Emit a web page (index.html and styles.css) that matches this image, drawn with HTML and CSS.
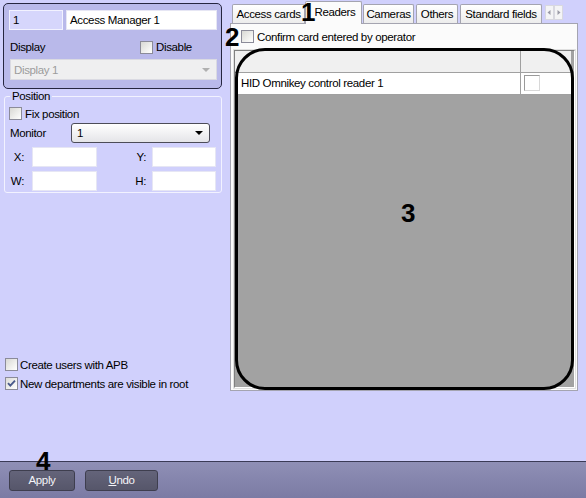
FILE: index.html
```html
<!DOCTYPE html>
<html>
<head>
<meta charset="utf-8">
<link rel="stylesheet" href="styles.css">
</head>
<body>
<div class="app">
  <div class="main">
    <div class="left">
      <div class="panel">
        <div class="prow">
          <div class="field fid">1</div>
          <div class="field fname">Access Manager 1</div>
        </div>
        <div class="prow r2">
          <span class="lbl-display">Display</span>
          <span class="chk"><span class="box"></span><span>Disable</span></span>
        </div>
        <div class="select dis"><span>Display 1</span><span class="arrow"></span></div>
      </div>

      <fieldset class="pos">
        <legend>Position</legend>
        <div class="chk fix"><span class="box"></span><span>Fix position</span></div>
        <div class="monrow">
          <span class="mlabel">Monitor</span>
          <div class="select mon"><span>1</span><span class="arrow"></span></div>
        </div>
        <div class="xyrow">
          <span class="l1">X:</span><div class="field in"></div>
          <span class="l2">Y:</span><div class="field in2"></div>
        </div>
        <div class="xyrow">
          <span class="l1">W:</span><div class="field in"></div>
          <span class="l2">H:</span><div class="field in2"></div>
        </div>
      </fieldset>

      <div class="bchecks">
        <div class="chk"><span class="box"></span><span>Create users with APB</span></div>
        <div class="chk"><span class="box on"><svg width="11" height="11" viewBox="0 0 11 11"><path d="M2 5.2 L4.3 7.6 L9 2.6" fill="none" stroke="#4a5a8c" stroke-width="1.9"/></svg></span><span>New departments are visible in root</span></div>
      </div>
    </div>

    <div class="right">
      <div class="tabs">
        <div class="tab t-access">Access cards</div>
        <div class="tab active t-readers">Readers</div>
        <div class="tab t-cameras">Cameras</div>
        <div class="tab t-others">Others</div>
        <div class="tab t-std">Standard fields</div>
        <div class="scroll">
          <span class="sbtn"><svg width="7" height="7" viewBox="0 0 7 7"><path d="M4.5 1 L1.5 3.5 L4.5 6Z" fill="#9a9aa6"/></svg></span>
          <span class="sbtn"><svg width="7" height="7" viewBox="0 0 7 7"><path d="M2.5 1 L5.5 3.5 L2.5 6Z" fill="#9a9aa6"/></svg></span>
        </div>
      </div>
      <div class="page">
        <div class="chk confirm"><span class="box"></span><span>Confirm card entered by operator</span></div>
        <div class="grid">
          <div class="grow ghead"><div class="c1"></div><div class="c2"></div></div>
          <div class="grow gdata"><div class="c1">HID Omnikey control reader 1</div><div class="c2"><span class="cellbox"></span></div></div>
        </div>
        <div class="callout"></div>
      </div>
      <span class="num n1">1</span>
      <span class="num n2">2</span>
      <span class="num n3">3</span>
    </div>
  </div>

  <div class="footer">
    <div class="btn apply">Apply</div>
    <div class="btn undo"><u>U</u>ndo</div>
  </div>
  <span class="num n4">4</span>
</div>
</body>
</html>
```

FILE: styles.css
```css
* { box-sizing: border-box; }
html, body { margin: 0; padding: 0; }
body {
  background: #d0d0fc;
  font-family: "Liberation Sans", Arial, sans-serif;
  font-size: 11.5px;
  letter-spacing: -0.35px;
  color: #000;
}
.app {
  position: relative;
  width: 586px;
  height: 498px;
  display: flex;
  flex-direction: column;
  overflow: hidden;
}
.main {
  height: 461px;
  display: flex;
}
.left {
  width: 230px;
  padding: 3px 0 0 3px;
  display: flex;
  flex-direction: column;
}
.panel {
  width: 219px;
  height: 86px;
  border: 1px solid #262640;
  border-radius: 5px;
  background: #b9b9ea;
  padding: 6px 0 0 5px;
}
.prow { display: flex; align-items: center; }
.field {
  height: 20px;
  background: #fff;
  border: 1px solid #e6e6f4;
  line-height: 18px;
  padding-left: 3px;
  white-space: nowrap;
}
.fid { width: 54px; background: #d6d6fc; border-color: #f2f2ff; }
.fname { width: 151px; margin-left: 3px; }
.r2 { margin-top: 10px; height: 14px; }
.lbl-display { width: 131px; padding-left: 1px; }
.chk { display: flex; align-items: center; white-space: nowrap; }
.box {
  width: 13px; height: 13px;
  border: 1px solid #8b8b99;
  background: linear-gradient(135deg, #d8d8d4 0%, #f4f4f2 70%, #ffffff 100%);
  margin-right: 3px;
  flex: none;
  display: flex; align-items: center; justify-content: center;
}
.select {
  height: 21px;
  display: flex;
  align-items: center;
  justify-content: space-between;
  padding: 0 6px 0 3px;
}
.select.dis {
  margin: 5px 0 0 1px;
  width: 207px;
  background: #efeff0;
  border: 1px solid #dadae2;
  color: #9c9c9c;
}
.arrow {
  width: 0; height: 0;
  border-left: 4px solid transparent;
  border-right: 4px solid transparent;
  border-top: 4px solid #000;
}
.dis .arrow { border-top-color: #b0b0b0; }

.pos {
  margin: 0 0 0 1px;
  padding: 0;
  width: 218px;
  height: 104px;
  border: 1px solid #f2f2ff;
  border-radius: 3px;
  min-width: 0;
}
.pos legend {
  padding: 0 2px;
  margin-left: 5px;
  line-height: 14px;
}
.fix { margin: 4px 0 0 4px; height: 13px; }
.monrow { display: flex; align-items: center; margin-top: 3px; padding-left: 5px; }
.mlabel { width: 61px; }
.select.mon {
  width: 139px;
  height: 20px;
  border: 1px solid #4c4c58;
  border-radius: 3px;
  background: linear-gradient(#ffffff, #e4e4e8);
  padding-left: 5px;
}
.xyrow { display: flex; align-items: center; margin-top: 4px; }
.l1 { width: 27px; text-align: right; padding-right: 8px; }
.l2 { width: 55px; text-align: right; padding-right: 6px; }
.field.in { width: 65px; }
.field.in2 { width: 64px; }

.bchecks {
  margin: auto 0 71px 2px;
  display: flex;
  flex-direction: column;
  gap: 6px;
}
.bchecks .chk { height: 13px; }
.bchecks .box { margin-right: 2px; }
.box.on { background: linear-gradient(135deg, #dcdcd8, #ffffff); }

.right {
  position: relative;
  width: 348px;
  display: flex;
  flex-direction: column;
}
.tabs {
  height: 23px;
  display: flex;
  align-items: flex-end;
  padding-left: 2px;
  position: relative;
  z-index: 2;
}
.tab {
  height: 19px;
  border: 1px solid #a4a4b0;
  border-bottom: none;
  border-radius: 2px 2px 0 0;
  background: linear-gradient(#ffffff, #ececec);
  text-align: center;
  line-height: 18px;
  white-space: nowrap;
}
.tab.active {
  height: 23px;
  margin-bottom: -1px;
  background: #fbfbfb;
  line-height: 20px;
  padding-left: 3px;
}
.t-access { width: 73px; }
.t-readers { width: 57px; }
.t-cameras { width: 51px; margin-left: 1px; }
.t-others { width: 42px; margin-left: 2px; }
.t-std { width: 82px; margin-left: 2px; }
.scroll { display: flex; margin: 0 0 3px 3px; align-self: flex-end; }
.sbtn {
  width: 9px; height: 15px;
  border: 1px solid #d8d8e0;
  background: #f4f4f6;
  display: flex; align-items: center; justify-content: center;
}
.page {
  position: relative;
  height: 368px;
  border: 1px solid #a4a4b0;
  background: #fbfbfb;
  padding: 0 0 0 3px;
}
.confirm { margin: 6px 0 0 7px; height: 13px; }
.grid {
  margin-top: 7px;
  width: 341px;
  height: 338px;
  background: #a2a2a2;
  border: 1px solid;
  border-color: #808080 #ffffff #ffffff #808080;
  box-shadow: 0 0 0 1px #e0e0e0;
}
.grow { display: flex; width: 336px; height: 22px; border-bottom: 1px solid #a0a0a0; }
.ghead { background: #f0f0f0; }
.gdata { background: #fff; }
.c1 { width: 286px; border-right: 1px solid #a0a0a0; padding-left: 6px; line-height: 21px; white-space: nowrap; }
.c2 { flex: 1; padding: 2px 0 0 3px; }
.cellbox {
  display: block;
  width: 16px; height: 16px;
  background: #fff;
  border: 1px solid;
  border-color: #9a9a9a #d8d8d8 #d8d8d8 #9a9a9a;
}
.callout {
  position: absolute;
  left: 4px; top: 24px;
  width: 339px; height: 342px;
  border: 3px solid #000;
  border-radius: 30px;
  pointer-events: none;
}

.footer {
  height: 37px;
  border-top: 1px solid #3a3a56;
  background: linear-gradient(#8f8fb6, #7b7ba4);
  display: flex;
  padding: 8px 0 0 9px;
  gap: 10px;
}
.btn {
  height: 21px;
  border: 1px solid #3e3e4e;
  border-radius: 3px;
  background: linear-gradient(#64647a, #56566a);
  color: #f4f4f8;
  text-align: center;
  line-height: 19px;
}
.apply { width: 66px; }
.undo { width: 73px; }

.num {
  position: absolute;
  font-family: "Liberation Sans", Arial, sans-serif;
  font-weight: bold;
  font-size: 26px;
  line-height: 26px;
  letter-spacing: 0;
  color: #000;
  z-index: 5;
}
.n1 { left: 71px; top: -1px; }
.n2 { left: -5px; top: 24px; }
.n3 { left: 171px; top: 200px; }
.n4 { left: 36px; top: 448px; }
```
